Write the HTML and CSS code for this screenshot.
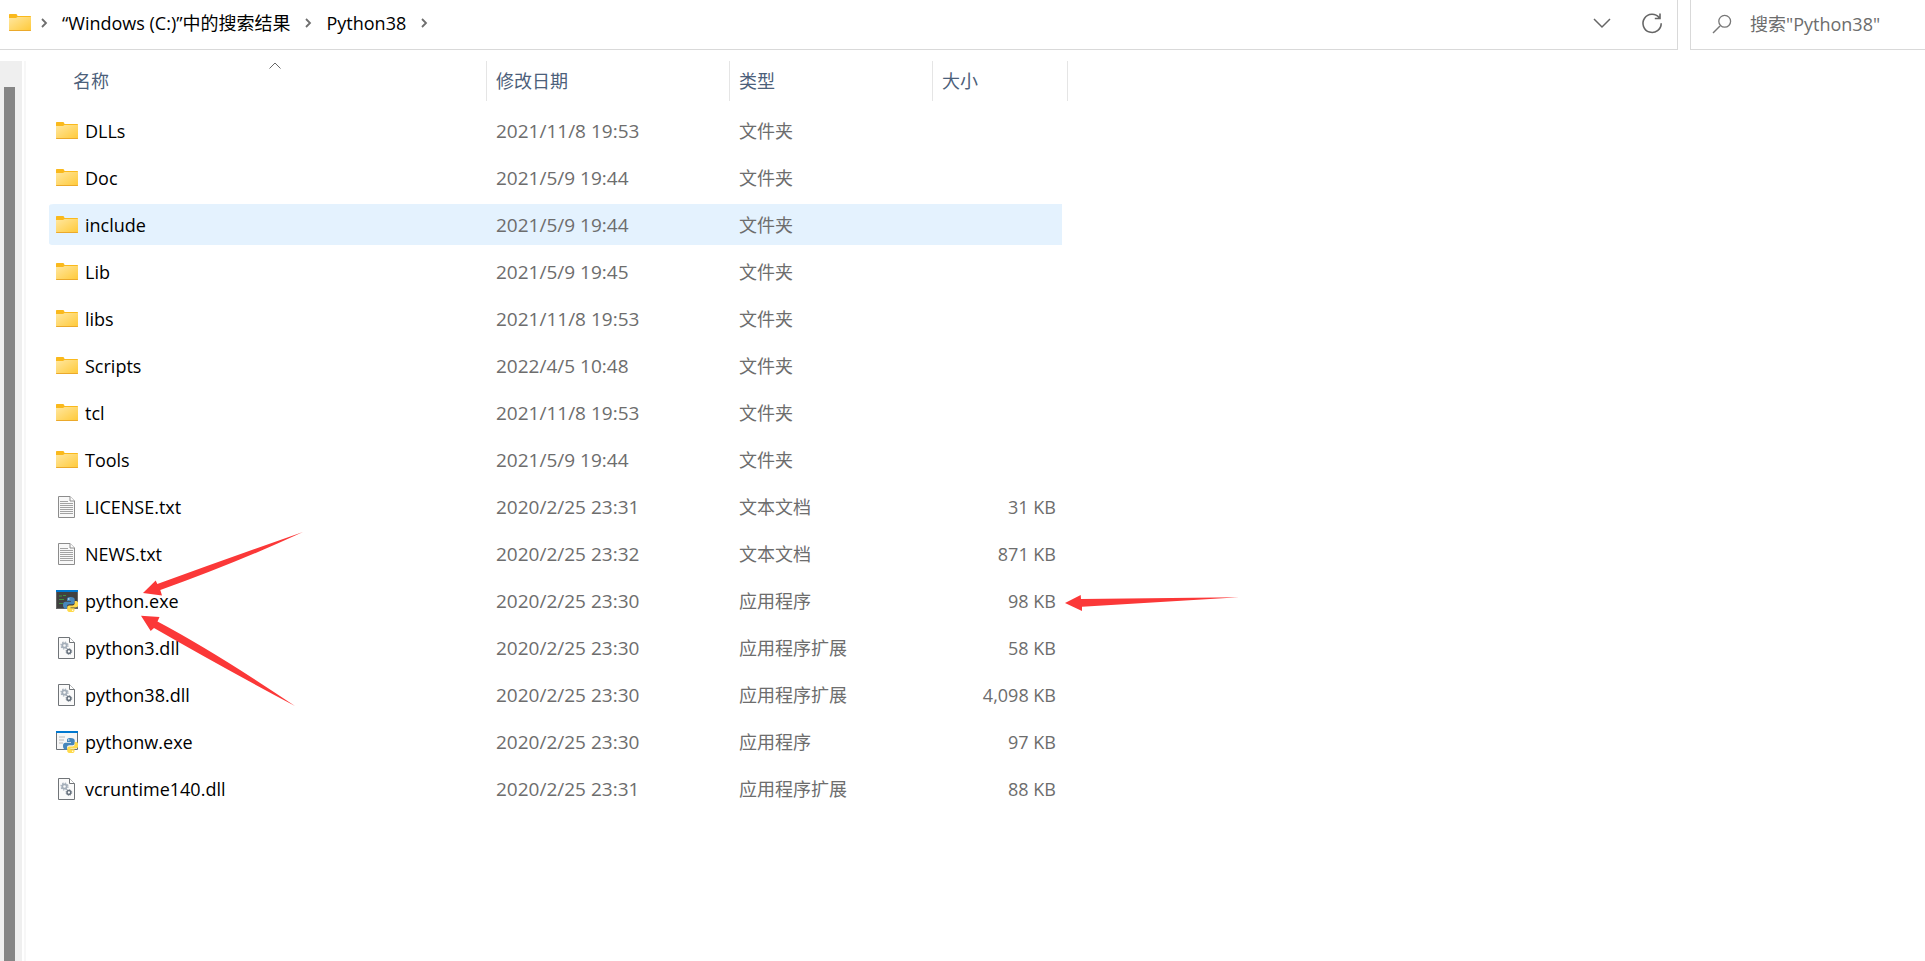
FILE: index.html
```html
<!DOCTYPE html>
<html lang="zh-CN">
<head>
<meta charset="utf-8">
<title>Python38</title>
<link rel="stylesheet" href="styles.css">
</head>
<body>
<svg class="defs" aria-hidden="true">
  <defs>
    <linearGradient id="fold" x1="0" y1="0" x2="1" y2="1">
      <stop offset="0" stop-color="#ffe7a0"/><stop offset="1" stop-color="#ffc937"/>
    </linearGradient>
    <symbol id="folder" viewBox="0 0 22 22">
      <path d="M0 2.700Q0 2 .7 2H7q.6 0 1 .5L8.500 4H21.300Q22 4 22 4.700V10H0z" fill="#fab91c"/>
      <path d="M0 6H7L8.500 5H22V18.300Q22 19 21.300 19H.7Q0 19 0 18.300z" fill="url(#fold)"/>
      <path d="M0 18H22V18.300Q22 19 21.300 19H.7Q0 19 0 18.300z" fill="#eba92b"/>
    </symbol>
    <symbol id="txt" viewBox="0 0 22 22">
      <path d="M2.500 .5H14L18.500 5V21.500H2.500z" fill="#f8f8f8" stroke="#8c8c8c"/>
      <path d="M14 .5V5H18.500" fill="#fff" stroke="#8c8c8c"/>
      <path d="M4 5.500H12M4 7.500H17M4 9.500H17M4 11.500H17M4 13.500H17M4 15.500H17M4 17.500H17" stroke="#a2a2a2" fill="none"/>
    </symbol>
    <symbol id="dll" viewBox="0 0 22 22">
      <path d="M2.500 .5H13.500L18.500 5.500V21.500H2.500z" fill="#fafafa" stroke="#707478"/>
      <path d="M13.500 .5V5.500H18.500" fill="#fff" stroke="#707478"/>
      <circle cx="8.500" cy="8.500" r="2.200" fill="none" stroke="#a3adb8" stroke-width="1.800"/>
      <circle cx="8.500" cy="8.500" r="3.500" fill="none" stroke="#a3adb8" stroke-width="1.200" stroke-dasharray="1.400 1.350"/>
      <circle cx="12.900" cy="14.500" r="1.900" fill="none" stroke="#66717d" stroke-width="1.500"/>
      <circle cx="12.900" cy="14.500" r="2.900" fill="none" stroke="#66717d" stroke-width=".8" stroke-dasharray="1.100 1.180"/>
    </symbol>
    <symbol id="snake" viewBox="0 0 22 22">
      <path d="M14.500 7c-3.300 0-3.500 1.300-3.500 2.500V11h4v.8H9.500C8 11.800 7 13 7 15s1 3.700 2.500 3.700H11V16.500c0-1.500 1-2.300 2.400-2.300h3.200c1.200 0 2.100-.9 2.100-2V9.500C18.700 8 17.500 7 14.500 7z" fill="#4686bb"/>
      <path d="M15 22.300c3.300 0 3.500-1.300 3.500-2.500v-1.500h-4v-.8H20c1.500 0 2.300-1.200 2.300-3.300 0-2-1-3.200-2.300-3.200h-1.300v2c0 1.500-1 2.400-2.200 2.400h-3.200c-1.200 0-2.100.9-2.100 2.100v2.300c0 1.500 1 2.500 3.800 2.500z" fill="#ffda4b"/>
      <circle cx="12.800" cy="9" r=".7" fill="#fff"/><circle cx="16.700" cy="20.200" r=".7" fill="#fff"/>
    </symbol>
    <symbol id="exe" viewBox="0 0 22 22">
      <path d="M0 0H22V19H0z" fill="#666"/><path d="M1 2H21V18H1z" fill="#404040"/>
      <path d="M0 0H22V2H0z" fill="#0078d0"/>
      <path d="M3 6H6M7 5.500H10M3 9.500H8M3 13.500H7" stroke="#3f9142" fill="none"/>
      <use href="#snake"/>
    </symbol>
    <symbol id="exew" viewBox="0 0 22 22">
      <path d="M.5 .5H21.500V18.500H.5z" fill="#f6f6f6" stroke="#6b7075"/>
      <path d="M0 0H22V2H0z" fill="#0078d0"/>
      <path d="M3 6H9M3 9H8M3 12H7" stroke="#b8b8b8" fill="none"/>
      <use href="#snake"/>
    </symbol>
    <symbol id="chev" viewBox="0 0 8 10">
      <path d="M2 1L6 5L2 9" fill="none" stroke="#6e6e6e" stroke-width="1.800"/>
    </symbol>
  </defs>
</svg>

<header class="topbar">
  <div class="address">
    <svg class="icon"><use href="#folder"/></svg>
    <nav class="crumbs" aria-label="路径">
      <svg class="chev"><use href="#chev"/></svg>
      <a href="#results">“Windows (C:)”中的搜索结果</a>
      <svg class="chev"><use href="#chev"/></svg>
      <a href="#python38">Python38</a>
      <svg class="chev"><use href="#chev"/></svg>
    </nav>
    <button class="tool" type="button" aria-label="历史记录">
      <svg viewBox="0 0 20 20"><path d="M2 6L10 14L18 6" fill="none" stroke="#666" stroke-width="1.500"/></svg>
    </button>
    <button class="tool" type="button" aria-label="刷新">
      <svg viewBox="0 0 20 20"><path d="M17.200 4.700A9.100 9.100 0 1 0 19.200 10.300M18 .5V5.500H12.800" fill="none" stroke="#666" stroke-width="1.600"/></svg>
    </button>
  </div>
  <label class="search">
    <svg viewBox="0 0 20 20"><path d="M1 19L8 12" stroke="#777" stroke-width="1.400"/><circle cx="12.700" cy="7.300" r="5.900" fill="none" stroke="#777" stroke-width="1.300"/></svg>
    <input type="search" aria-label="搜索" placeholder='搜索"Python38"'>
  </label>
</header>

<main class="pane">
  <div class="scroll"><div class="thumb"></div></div>
  <div class="divider"></div>
  <div class="files">
    <table>
      <colgroup><col class="c-name"><col class="c-date"><col class="c-type"><col class="c-size"></colgroup>
      <thead>
        <tr>
          <th class="first" aria-sort="ascending"><button type="button">名称<svg class="sort" viewBox="0 0 12 7"><path d="M.5 6.500L6 1L11.500 6.500" fill="none" stroke="#666"/></svg></button></th>
          <th><button type="button">修改日期</button></th>
          <th><button type="button">类型</button></th>
          <th><button type="button">大小</button></th>
        </tr>
      </thead>
      <tbody>
        <tr><td><span class="name"><svg class="icon"><use href="#folder"/></svg>DLLs</span></td><td class="date">2021/11/8 19:53</td><td>文件夹</td><td class="size"></td></tr>
        <tr><td><span class="name"><svg class="icon"><use href="#folder"/></svg>Doc</span></td><td class="date">2021/5/9 19:44</td><td>文件夹</td><td class="size"></td></tr>
        <tr class="hover"><td><span class="name"><svg class="icon"><use href="#folder"/></svg>include</span></td><td class="date">2021/5/9 19:44</td><td>文件夹</td><td class="size"></td></tr>
        <tr><td><span class="name"><svg class="icon"><use href="#folder"/></svg>Lib</span></td><td class="date">2021/5/9 19:45</td><td>文件夹</td><td class="size"></td></tr>
        <tr><td><span class="name"><svg class="icon"><use href="#folder"/></svg>libs</span></td><td class="date">2021/11/8 19:53</td><td>文件夹</td><td class="size"></td></tr>
        <tr><td><span class="name"><svg class="icon"><use href="#folder"/></svg>Scripts</span></td><td class="date">2022/4/5 10:48</td><td>文件夹</td><td class="size"></td></tr>
        <tr><td><span class="name"><svg class="icon"><use href="#folder"/></svg>tcl</span></td><td class="date">2021/11/8 19:53</td><td>文件夹</td><td class="size"></td></tr>
        <tr><td><span class="name"><svg class="icon"><use href="#folder"/></svg>Tools</span></td><td class="date">2021/5/9 19:44</td><td>文件夹</td><td class="size"></td></tr>
        <tr><td><span class="name"><svg class="icon"><use href="#txt"/></svg>LICENSE.txt</span></td><td class="date">2020/2/25 23:31</td><td>文本文档</td><td class="size">31 KB</td></tr>
        <tr><td><span class="name"><svg class="icon"><use href="#txt"/></svg>NEWS.txt</span></td><td class="date">2020/2/25 23:32</td><td>文本文档</td><td class="size">871 KB</td></tr>
        <tr><td><span class="name"><svg class="icon"><use href="#exe"/></svg>python.exe</span></td><td class="date">2020/2/25 23:30</td><td>应用程序</td><td class="size">98 KB</td></tr>
        <tr><td><span class="name"><svg class="icon"><use href="#dll"/></svg>python3.dll</span></td><td class="date">2020/2/25 23:30</td><td>应用程序扩展</td><td class="size">58 KB</td></tr>
        <tr><td><span class="name"><svg class="icon"><use href="#dll"/></svg>python38.dll</span></td><td class="date">2020/2/25 23:30</td><td>应用程序扩展</td><td class="size">4,098 KB</td></tr>
        <tr><td><span class="name"><svg class="icon"><use href="#exew"/></svg>pythonw.exe</span></td><td class="date">2020/2/25 23:30</td><td>应用程序</td><td class="size">97 KB</td></tr>
        <tr><td><span class="name"><svg class="icon"><use href="#dll"/></svg>vcruntime140.dll</span></td><td class="date">2020/2/25 23:31</td><td>应用程序扩展</td><td class="size">88 KB</td></tr>
      </tbody>
    </table>
  </div>
</main>

<svg class="arrows" width="1300" height="800" viewBox="0 0 1300 800" aria-hidden="true">
  <path d="M143 593L155.700 580.500L157.300 584Q232 557 303 532Q236 563 160.300 590L162 595.500z"/>
  <path d="M141 615.700L159.500 617L157.500 621.500Q215 652 295 706Q220 666 154 628L150.700 631z"/>
  <path d="M1065 603L1080.700 595L1081 599L1239 597.300L1082 606.700V611z"/>
</svg>
</body>
</html>
```
FILE: styles.css
```css
* {
  box-sizing: border-box;
}

body {
  position: relative;
  display: flex;
  flex-direction: column;
  min-height: 100vh;
  margin: 0;
  background: #fff;
  color: #000;
  font: 18px/24px "Open Sans", "Noto Sans CJK SC", sans-serif;
}

button,
input {
  font: inherit;
  color: inherit;
  border: 0;
  padding: 0;
  background: none;
}

.defs {
  position: absolute;
  width: 0;
  height: 0;
}

.icon {
  width: 22px;
  height: 22px;
  flex: none;
  overflow: visible;
}

/* address bar and search */
.topbar {
  display: flex;
  gap: 12px;
  height: 50px;
}

.address {
  flex: 1;
  display: flex;
  align-items: center;
  padding: 0 15px 3px 9px;
  border: solid #d9d9d9;
  border-width: 0 1px 1px 0;
}

.crumbs {
  flex: 1;
  display: flex;
  align-items: center;
  gap: 14px;
  padding-left: 9px;
}

.crumbs a {
  color: inherit;
  text-decoration: none;
}

.chev {
  width: 8px;
  height: 10px;
}

.tool {
  display: flex;
  margin-left: 30px;
}

.tool svg {
  width: 20px;
  height: 20px;
  overflow: visible;
}

.search {
  display: flex;
  align-items: center;
  gap: 18px;
  width: 235px;
  padding: 0 0 2px 21px;
  border: solid #d9d9d9;
  border-width: 0 0 1px 1px;
  color: #6d6d6d;
}

.search svg {
  width: 20px;
  height: 20px;
  flex: none;
}

.search input {
  flex: 1;
  min-width: 0;
  outline: 0;
}

.search input::placeholder {
  color: #6d6d6d;
}

/* file pane */
.pane {
  flex: 1;
  display: flex;
  margin-top: 11px;
}

.scroll {
  width: 22px;
  display: flex;
  padding: 26px 7px 0 4px;
  background: #efefef;
}

.thumb {
  flex: 1;
  background: #858585;
}

.divider {
  width: 2px;
  margin-left: 2px;
  background: #f7f7f7;
}

.files {
  flex: 1;
  padding-left: 23px;
}

table {
  table-layout: fixed;
  width: 1019px;
  border-collapse: separate;
  border-spacing: 0;
}

.c-name { width: 438px; }
.c-date { width: 243px; }
.c-type { width: 203px; }
.c-size { width: 135px; }

th {
  height: 46px;
  padding: 0;
  font-weight: inherit;
  vertical-align: top;
}

th.first {
  padding-left: 15px;
}

th button {
  position: relative;
  display: block;
  width: 100%;
  height: 40px;
  padding-left: 9px;
  border-right: 1px solid #e5e5e5;
  text-align: left;
  color: #4c607a;
}

.sort {
  position: absolute;
  top: 1px;
  left: calc(50% - 6px);
  width: 12px;
  height: 7px;
}

td {
  height: 47px;
  padding: 0 0 0 9px;
  border: solid transparent;
  border-width: 3px 0;
  background-clip: padding-box;
  color: #6d6d6d;
  white-space: nowrap;
}

td:first-child {
  padding-left: 7px;
  border-radius: 5px 0 0 5px;
  color: #000;
}

td:last-child {
  padding-right: 6px;
  border-right-width: 6px;
  border-radius: 0 5px 5px 0;
  text-align: right;
}

.hover td {
  background-color: #e4f2fe;
}

.name {
  display: flex;
  align-items: center;
  gap: 7px;
}

.date {
  font-size: 19px;
}

/* hand-drawn pointers over the list */
.arrows {
  position: absolute;
  top: 0;
  left: 0;
  fill: #fb3838;
  pointer-events: none;
}
```
